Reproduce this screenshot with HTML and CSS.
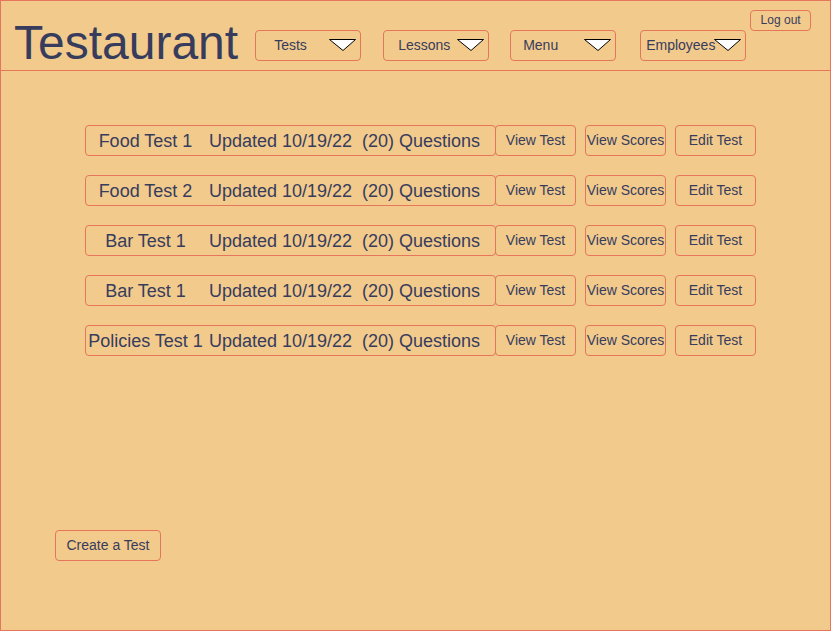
FILE: index.html
```html
<!DOCTYPE html>
<html lang="en">
<head>
<meta charset="utf-8">
<title>Testaurant</title>
<link rel="stylesheet" href="styles.css">
</head>
<body>
<div class="page">
  <header class="header">
    <h1 class="title">Testaurant</h1>
    <nav class="nav">
      <button class="dropdown dd-tests"><span class="dd-label">Tests</span><svg class="caret" width="27" height="12" viewBox="0 0 27 12"><polygon points="0.5,0.5 26.5,0.5 14,11.5" fill="#fff" stroke="#000" stroke-width="1"/></svg></button>
      <button class="dropdown dd-lessons"><span class="dd-label">Lessons</span><svg class="caret" width="27" height="12" viewBox="0 0 27 12"><polygon points="0.5,0.5 26.5,0.5 14,11.5" fill="#fff" stroke="#000" stroke-width="1"/></svg></button>
      <button class="dropdown dd-menu"><span class="dd-label">Menu</span><svg class="caret" width="27" height="12" viewBox="0 0 27 12"><polygon points="0.5,0.5 26.5,0.5 14,11.5" fill="#fff" stroke="#000" stroke-width="1"/></svg></button>
      <button class="dropdown dd-employees"><span class="dd-label">Employees</span><svg class="caret" width="27" height="12" viewBox="0 0 27 12"><polygon points="0.5,0.5 26.5,0.5 14,11.5" fill="#fff" stroke="#000" stroke-width="1"/></svg></button>
    </nav>
    <button class="logout">Log out</button>
  </header>
  <main class="main">
    <ul class="tests">
      <li class="test-row">
        <div class="test-info"><span class="t-name">Food Test 1</span><span class="t-date">Updated 10/19/22</span><span class="t-count">(20) Questions</span></div>
        <button class="btn btn-first">View Test</button><button class="btn">View Scores</button><button class="btn">Edit Test</button>
      </li>
      <li class="test-row">
        <div class="test-info"><span class="t-name">Food Test 2</span><span class="t-date">Updated 10/19/22</span><span class="t-count">(20) Questions</span></div>
        <button class="btn btn-first">View Test</button><button class="btn">View Scores</button><button class="btn">Edit Test</button>
      </li>
      <li class="test-row">
        <div class="test-info"><span class="t-name">Bar Test 1</span><span class="t-date">Updated 10/19/22</span><span class="t-count">(20) Questions</span></div>
        <button class="btn btn-first">View Test</button><button class="btn">View Scores</button><button class="btn">Edit Test</button>
      </li>
      <li class="test-row">
        <div class="test-info"><span class="t-name">Bar Test 1</span><span class="t-date">Updated 10/19/22</span><span class="t-count">(20) Questions</span></div>
        <button class="btn btn-first">View Test</button><button class="btn">View Scores</button><button class="btn">Edit Test</button>
      </li>
      <li class="test-row">
        <div class="test-info"><span class="t-name">Policies Test 1</span><span class="t-date">Updated 10/19/22</span><span class="t-count">(20) Questions</span></div>
        <button class="btn btn-first">View Test</button><button class="btn">View Scores</button><button class="btn">Edit Test</button>
      </li>
    </ul>
    <button class="create">Create a Test</button>
  </main>
</div>
</body>
</html>
```
FILE: styles.css
```css
* { box-sizing: border-box; }
html, body { margin: 0; padding: 0; }
body {
  font-family: "Liberation Sans", Arial, sans-serif;
  color: #373c5d;
  background: #f2ca8c;
}
.page {
  width: 831px;
  height: 631px;
  border: 1px solid #e5765c;
  background: #f2ca8c;
  display: flex;
  flex-direction: column;
}
button {
  font-family: inherit;
  color: inherit;
  background: transparent;
  border: 1px solid #e5765c;
  border-radius: 4px;
  padding: 0;
  margin: 0;
  cursor: pointer;
}
.header {
  height: 70px;
  border-bottom: 1px solid #e5765c;
  display: flex;
  align-items: flex-start;
  padding-left: 13px;
}
.title {
  margin: 15px 0 0 0;
  font-weight: normal;
  font-size: 48px;
  line-height: 54px;
  letter-spacing: 0;
}
.nav {
  display: flex;
  margin-top: 29px;
  margin-left: 17px;
}
.dropdown {
  width: 106px;
  height: 31px;
  display: flex;
  align-items: center;
  font-size: 14px;
  position: relative;
  margin-right: 22px;
  padding-right: 4px;
  padding-bottom: 1px;
}
.dd-lessons { margin-right: 21px; }
.dd-menu { margin-right: 24px; }
.dd-employees { margin-right: 0; }
.caret {
  margin-left: auto;
  display: block;
  margin-top: -1px;
}
.dd-tests .dd-label { padding-left: 18px; }
.dd-lessons .dd-label { padding-left: 14px; }
.dd-menu .dd-label { padding-left: 12px; }
.dd-employees .dd-label { padding-left: 5px; margin-right: -4px; }
.logout {
  margin-top: 9px;
  margin-left: 4px;
  width: 61px;
  height: 21px;
  font-size: 12px;
  padding-bottom: 1px;
}
.main {
  flex: 1;
  display: flex;
  flex-direction: column;
  align-items: flex-start;
  padding-top: 54px;
}
.tests {
  list-style: none;
  margin: 0;
  padding: 0 0 0 84px;
  display: flex;
  flex-direction: column;
  gap: 19px;
}
.test-row {
  display: flex;
  height: 31px;
}
.test-info {
  width: 411px;
  height: 31px;
  border: 1px solid #e5765c;
  border-radius: 4px;
  display: flex;
  align-items: center;
  font-size: 18px;
  white-space: nowrap;
  padding-top: 1px;
}
.t-name {
  width: 119px;
  text-align: center;
}
.t-date {
  width: 157px;
  padding-left: 4px;
}
.btn {
  width: 81px;
  height: 31px;
  font-size: 14px;
  margin-left: 9px;
  white-space: nowrap;
  padding-bottom: 1px;
}
.btn-first { margin-left: -1px; }
.create {
  margin-top: 174px;
  margin-left: 54px;
  width: 106px;
  height: 31px;
  font-size: 14px;
  padding-bottom: 1px;
}
```
